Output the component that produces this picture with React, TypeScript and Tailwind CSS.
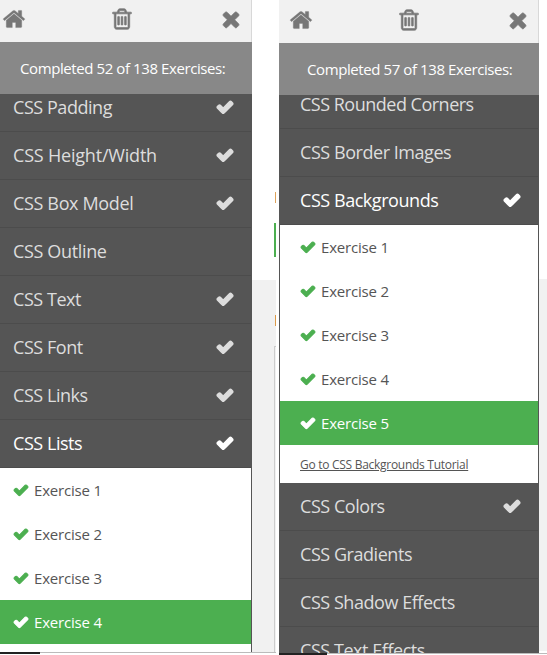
import React from "react";

const paths = {
  home: "M1472 992v480q0 26-19 45t-45 19h-384v-384h-256v384h-384q-26 0-45-19t-19-45v-480q0-1 .5-3t.5-3l575-474 575 474q1 2 1 6zm223-69l-62 74q-8 9-21 11h-3q-13 0-21-7l-692-577-692 577q-12 8-24 7-13-2-21-11l-62-74q-8-10-7-23.5t11-21.5l719-599q32-26 76-26t76 26l244 204v-195q0-14 9-23t23-9h192q14 0 23 9t9 23v408l219 182q10 8 11 21.5t-7 23.5z",
  trash: "M704 736v576q0 14-9 23t-23 9h-64q-14 0-23-9t-9-23v-576q0-14 9-23t23-9h64q14 0 23 9t9 23zm256 0v576q0 14-9 23t-23 9h-64q-14 0-23-9t-9-23v-576q0-14 9-23t23-9h64q14 0 23 9t9 23zm256 0v576q0 14-9 23t-23 9h-64q-14 0-23-9t-9-23v-576q0-14 9-23t23-9h64q14 0 23 9t9 23zm128 724v-948h-896v948q0 22 7 40.5t14.5 27 10.5 8.5h832q3 0 10.5-8.5t14.5-27 7-40.5zm-672-1076h448l-48-117q-7-9-17-11h-317q-10 2-17 11zm928 32v64q0 14-9 23t-23 9h-96v948q0 83-47 143.5t-113 60.5h-832q-66 0-113-58.5t-47-141.5v-952h-96q-14 0-23-9t-9-23v-64q0-14 9-23t23-9h309l70-167q15-37 54-63t79-26h320q40 0 79 26t54 63l70 167h309q14 0 23 9t9 23z",
  times: "M1490 1322q0 40-28 68l-136 136q-28 28-68 28t-68-28l-294-294-294 294q-28 28-68 28t-68-28l-136-136q-28-28-28-68t28-68l294-294-294-294q-28-28-28-68t28-68l136-136q28-28 68-28t68 28l294 294 294-294q28-28 68-28t68 28l136 136q28 28 28 68t-28 68l-294 294 294 294q28 28 28 68z",
  check: "M1671 566q0 40-28 68l-724 724-136 136q-28 28-68 28t-68-28l-136-136-362-362q-28-28-28-68t28-68l136-136q28-28 68-28t68 28l294 295 656-657q28-28 68-28t68 28l136 136q28 28 28 68z",
};

function Icon({ name, className }: { name: keyof typeof paths; className: string }) {
  return (
    <svg viewBox="0 0 1792 1792" fill="currentColor" stroke="currentColor" className={`shrink-0 overflow-visible ${className}`}>
      <path d={paths[name]} />
    </svg>
  );
}

function Toolbar({ className }: { className: string }) {
  return (
    <div className={`flex shrink-0 justify-between border-r border-[#d8d8d8] bg-[#f1f1f1] text-[#777] ${className}`}>
      <Icon name="home" className="size-6 stroke-[25]" />
      <Icon name="trash" className="mr-[2px] size-6 stroke-[50]" />
      <Icon name="times" className="size-6 stroke-[55]" />
    </div>
  );
}

function Progress({ done }: { done: number }) {
  return (
    <div className="flex h-[52px] shrink-0 items-center bg-[#888] pl-5 text-[15px] tracking-[-0.41px] whitespace-nowrap text-white">
      Completed {done} of 138 Exercises:
    </div>
  );
}

type TopicProps = { label: string; done?: boolean; active?: boolean; pad: string; tracking?: string };

function Topic({ label, done, active, pad, tracking = "tracking-[-0.45px]" }: TopicProps) {
  return (
    <div
      className={`flex h-12 shrink-0 items-center justify-between border-b border-[#4c4c4c] bg-[#555] pr-[17px] text-[18px] whitespace-nowrap ${tracking} ${pad} ${active ? "text-white" : "text-[#ddd]"}`}
    >
      <span>{label}</span>
      {done && <Icon name="check" className="mb-[2px] size-[18px] stroke-[160]" />}
    </div>
  );
}

function Exercise({ n, active, pad }: { n: number; active?: boolean; pad: string }) {
  return (
    <div
      className={`flex h-11 shrink-0 items-center gap-[5px] text-[15px] tracking-[-0.2px] whitespace-nowrap ${pad} ${active ? "bg-[#4caf50] text-white" : "bg-white text-[#555]"}`}
    >
      <Icon name="check" className={`size-4 stroke-[130] ${active ? "" : "text-[#4caf50]"}`} />
      <span>Exercise {n}</span>
    </div>
  );
}

const leftTopics = [
  { label: "CSS Padding", done: true },
  { label: "CSS Height/Width", done: true, tracking: "tracking-[-0.2px]" },
  { label: "CSS Box Model", done: true, tracking: "tracking-[-0.35px]" },
  { label: "CSS Outline", tracking: "tracking-[-0.35px]" },
  { label: "CSS Text", done: true },
  { label: "CSS Font", done: true },
  { label: "CSS Links", done: true },
];

export default function App() {
  return (
    <div className="flex h-[655px] w-[547px] overflow-hidden bg-white font-['Open_Sans','Noto_Sans',sans-serif]">
      <div className="flex w-[276px] flex-col">
        <div className="flex h-[652px]">
          <aside className="flex w-[252px] flex-col overflow-hidden">
            <Toolbar className="h-[42px] pt-[7px] pr-[8px] pl-[2px]" />
            <Progress done={52} />
            <div className="flex h-[558px] flex-col overflow-hidden border-r border-[#555]">
              <div className="-mt-[10px] flex flex-col">
                {leftTopics.map((t) => (
                  <Topic key={t.label} label={t.label} done={t.done} tracking={t.tracking} pad="pl-[13px]" />
                ))}
                <Topic label="CSS Lists" done active pad="pl-[13px]" />
                {[1, 2, 3, 4].map((n) => (
                  <Exercise key={n} n={n} active={n === 4} pad="pl-[13px]" />
                ))}
              </div>
            </div>
          </aside>
          <div className="flex w-6 flex-col items-end">
            <div className="mt-[192px] h-[11px] w-px bg-[#dfa35b]" />
            <div className="mt-5 h-[34px] w-[2px] bg-[#4caf50]" />
            <div className="mt-[23px] flex w-full grow flex-col items-end bg-[#f1f1f1]">
              <div className="mt-[35px] h-[11px] w-px bg-[#dc9a48]" />
              <div className="mt-5 w-[2px] grow border-t border-l border-[#ccc]" />
            </div>
          </div>
        </div>
        <div className="flex">
          <div className="h-[2px] w-10 bg-[#222]" />
          <div className="h-px grow bg-[#bbb]" />
        </div>
      </div>
      <div className="ml-[3px] flex w-[268px] flex-col">
        <div className="flex h-[653px]">
          <aside className="flex w-[260px] flex-col overflow-hidden">
            <Toolbar className="h-[43px] pt-2 pr-[8px] pl-[10px]" />
            <div className="flex flex-col bg-[#888] pl-2">
              <Progress done={57} />
            </div>
            <div className="flex h-[558px] flex-col overflow-hidden border-x border-[#555]">
              <div className="-mt-[14px] flex flex-col">
                <Topic label="CSS Rounded Corners" pad="pl-5" tracking="tracking-[-0.5px]" />
                <Topic label="CSS Border Images" pad="pl-5" />
                <Topic label="CSS Backgrounds" done active pad="pl-5" />
                {[1, 2, 3, 4, 5].map((n) => (
                  <Exercise key={n} n={n} active={n === 5} pad="pl-5" />
                ))}
                <div className="flex h-[38px] items-center bg-white pt-[2px] pl-5 text-[12px] tracking-[-0.28px] text-[#555]">
                  <span className="underline">Go to CSS Backgrounds Tutorial</span>
                </div>
                <Topic label="CSS Colors" done pad="pl-5" />
                <Topic label="CSS Gradients" pad="pl-5" />
                <Topic label="CSS Shadow Effects" pad="pl-5" />
                <Topic label="CSS Text Effects" pad="pl-5" />
              </div>
            </div>
          </aside>
          <div className="mt-[279px] mb-[2px] grow bg-[#f1f1f1]" />
        </div>
        <div className="flex">
          <div className="h-[2px] w-12 bg-[#222]" />
          <div className="h-px grow bg-[#bbb]" />
        </div>
      </div>
    </div>
  );
}
